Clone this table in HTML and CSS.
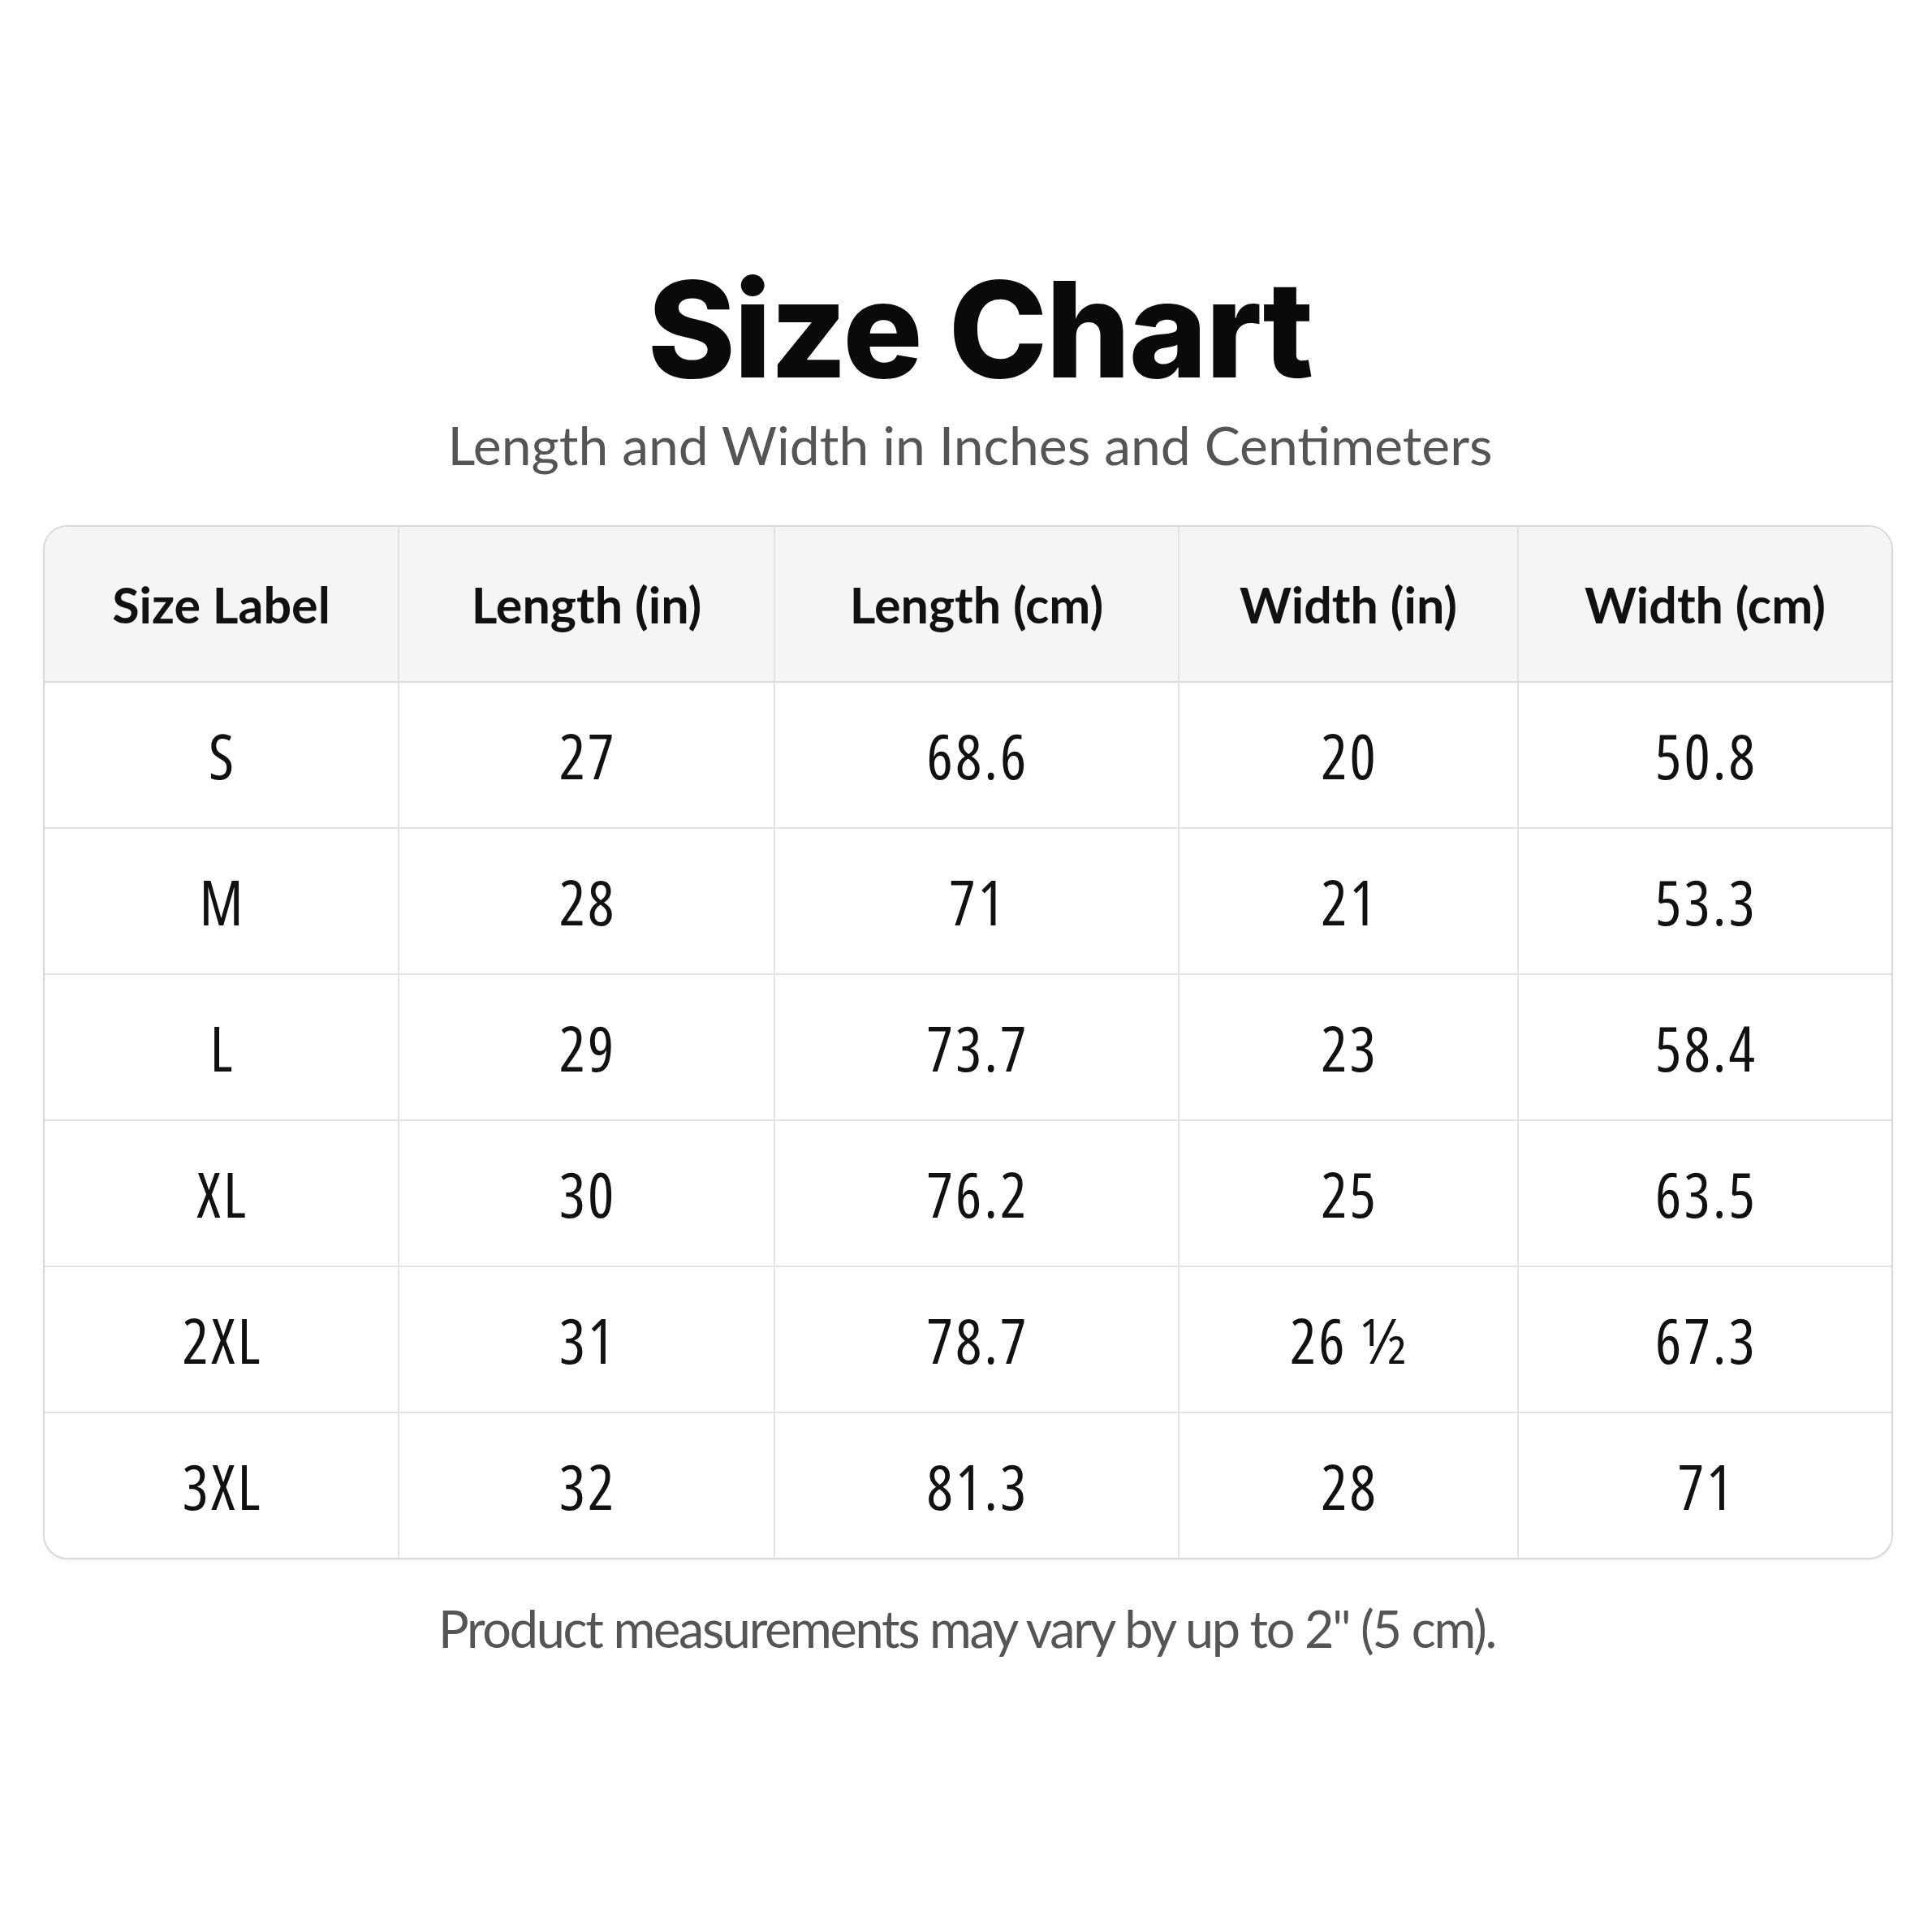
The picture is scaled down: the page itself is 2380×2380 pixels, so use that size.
FILE: index.html
```html
<!DOCTYPE html>
<html lang="en">
<head>
<meta charset="utf-8">
<title>Size Chart</title>
<link rel="stylesheet" href="styles.css">
</head>
<body>
<main class="page">
  <h1 class="title">Size Chart</h1>
  <p class="subtitle">Length and Width in Inches and Centimeters</p>
  <div class="table-wrap">
    <table class="chart">
      <colgroup>
        <col class="c1"><col class="c2"><col class="c3"><col class="c4"><col class="c5">
      </colgroup>
      <thead>
        <tr><th>Size Label</th><th>Length (in)</th><th>Length (cm)</th><th>Width (in)</th><th>Width (cm)</th></tr>
      </thead>
      <tbody>
        <tr><td>S</td><td>27</td><td>68.6</td><td>20</td><td>50.8</td></tr>
        <tr><td>M</td><td>28</td><td>71</td><td>21</td><td>53.3</td></tr>
        <tr><td>L</td><td>29</td><td>73.7</td><td>23</td><td>58.4</td></tr>
        <tr><td>XL</td><td>30</td><td>76.2</td><td>25</td><td>63.5</td></tr>
        <tr><td>2XL</td><td>31</td><td>78.7</td><td>26 ½</td><td>67.3</td></tr>
        <tr><td>3XL</td><td>32</td><td>81.3</td><td>28</td><td>71</td></tr>
      </tbody>
    </table>
  </div>
  <p class="note">Product measurements may vary by up to 2" (5 cm).</p>
</main>
</body>
</html>
```

FILE: styles.css
```css
html, body {
  margin: 0;
  padding: 0;
  background: #ffffff;
}

.page {
  width: 2380px;
  min-height: 2380px;
  display: flex;
  flex-direction: column;
  align-items: center;
  padding-top: 324px;
  box-sizing: border-box;
}

.title {
  margin: 0;
  padding-left: 34px;
  font-family: "Inter", "Liberation Sans", sans-serif;
  font-weight: 800;
  font-size: 164px;
  line-height: 1;
  color: #0a0a0a;
  letter-spacing: -2px;
}

.subtitle {
  margin: 27px 0 0;
  padding-left: 10px;
  font-family: "Lato", "Liberation Sans", sans-serif;
  font-weight: 400;
  font-size: 66px;
  line-height: 1;
  color: #555555;
  letter-spacing: 0;
}

.table-wrap {
  margin: 66px 0 0 5px;
  width: 2279px;
  border: 2px solid #d9d9d9;
  border-radius: 30px;
  overflow: hidden;
  box-sizing: border-box;
  background: #ffffff;
  box-shadow: 0 2px 4px rgba(0, 0, 0, 0.05);
}

.chart {
  width: 100%;
  border-collapse: separate;
  border-spacing: 0;
  table-layout: fixed;
}

.c1 { width: 437px; }
.c2 { width: 463px; }
.c3 { width: 498px; }
.c4 { width: 418px; }
.c5 { width: 459px; }

.chart th,
.chart td {
  padding: 0;
  text-align: center;
  vertical-align: middle;
  border-right: 2px solid #e3e3e3;
  border-bottom: 2px solid #e3e3e3;
  color: #111111;
}

.chart th:last-child,
.chart td:last-child {
  border-right: none;
}

.chart tbody tr:last-child td {
  border-bottom: none;
}

.chart th {
  height: 190px;
  background: #f5f5f5;
  font-family: "Lato", "Liberation Sans", sans-serif;
  font-weight: 700;
  font-size: 61px;
  border-bottom-color: #dddddd;
}

.chart td {
  height: 178px;
  font-family: "Open Sans", "Liberation Sans", sans-serif;
  font-stretch: 75%;
  font-weight: 400;
  font-size: 76px;
  letter-spacing: 3px;
  text-indent: 3px;
}

.note {
  margin: 53px 0 0;
  padding-left: 2px;
  font-family: "Lato", "Liberation Sans", sans-serif;
  font-weight: 400;
  font-size: 63px;
  line-height: 1;
  color: #555555;
  letter-spacing: -2.3px;
}
```
